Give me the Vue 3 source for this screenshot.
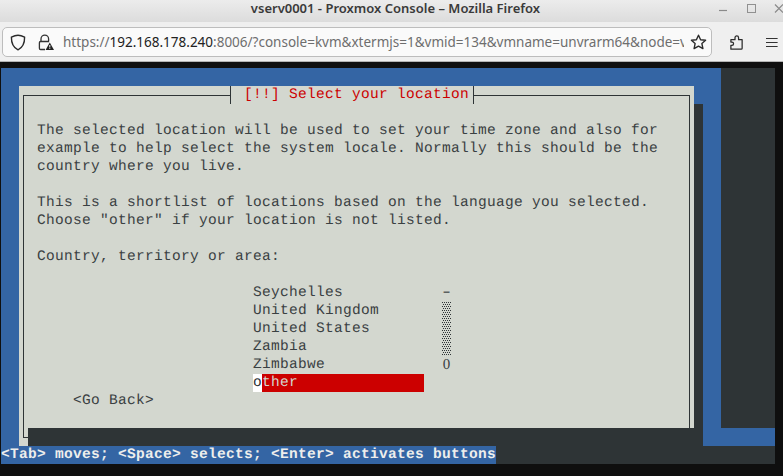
<script setup>
const message = `The selected location will be used to set your time zone and also for
example to help select the system locale. Normally this should be the
country where you live.

This is a shortlist of locations based on the language you selected.
Choose "other" if your location is not listed.

Country, territory or area:`
const countries = ['Seychelles', 'United Kingdom', 'United States', 'Zambia', 'Zimbabwe']
const url = 'https://'
const host = '192.168.178.240'
const rest = ':8006/?console=kvm&xtermjs=1&vmid=134&vmname=unvrarm64&node=v'
</script>

<template>
  <div class="page">
    <header class="titlebar">
      <span class="title">vserv0001 - Proxmox Console – Mozilla Firefox</span>
      <div class="winctl">
        <svg width="64" height="14" viewBox="0 0 64 14" fill="none" stroke="#8a8a8a">
          <path d="M0 10.5H8" stroke-width="1.2" />
          <rect x="28.5" y="4.5" width="8" height="8" stroke="#909090" />
          <path d="M56 4.5L64 12.5M64 4.5L56 12.5" stroke-width="1.2" />
        </svg>
      </div>
    </header>
    <nav class="toolbar">
      <div class="urlbar">
        <svg class="shield" width="16" height="17" viewBox="0 0 16 17" fill="none" stroke="#2b2b2b" stroke-width="1.4">
          <path d="M8 1.2C5.8 1.2 3.6 2 1.4 3.2C1.3 9 3.2 13.4 8 15.8C12.8 13.4 14.7 9 14.6 3.2C12.4 2 10.2 1.2 8 1.2Z" />
        </svg>
        <svg class="lock" width="16" height="17" viewBox="0 0 16 17" fill="none">
          <path d="M3 7.5V5A3.8 3.8 0 0 1 10.6 5V7.5" stroke="#333" stroke-width="1.3" />
          <path d="M7 15.5H2.6A1.2 1.2 0 0 1 1.4 14.3V8.7A1.2 1.2 0 0 1 2.6 7.5H11" stroke="#333" stroke-width="1.3" />
          <path d="M11.8 8.6L16 16H7.6Z" fill="#222" />
          <path d="M11.8 11V13.5M11.8 14.2V15" stroke="#fff" stroke-width="1" />
        </svg>
        <div class="url"><span class="dim">{{ url }}</span><span class="host">{{ host }}</span><span class="dim">{{ rest }}</span></div>
        <svg class="star" width="17" height="16" viewBox="0 0 17 16" fill="none" stroke="#2b2b2b" stroke-width="1.4" stroke-linejoin="round">
          <path d="M8.5 1.2L10.6 5.8L15.6 6.3L11.9 9.6L12.9 14.6L8.5 12.1L4.1 14.6L5.1 9.6L1.4 6.3L6.4 5.8Z" />
        </svg>
      </div>
      <svg class="puzzle" width="15" height="17" viewBox="0 0 15 17" fill="none" stroke="#2b2b2b" stroke-width="1.4" stroke-linejoin="round">
        <path d="M1 16V11.6H2.2A1.8 1.8 0 0 0 2.2 8H1V5.4H5.6V3.2A2 2 0 0 1 9.6 3.2V5.4H13.6V15A1 1 0 0 1 12.6 16Z" />
      </svg>
      <svg class="menu" width="13" height="11" viewBox="0 0 13 11" stroke="#333" stroke-width="1.3">
        <path d="M0 1H13M0 5.5H13M0 10H13" />
      </svg>
    </nav>
    <main class="terminal">
      <div class="screen-blue"></div>
      <div class="corner-blue"></div>
      <div class="dialog"></div>
      <div class="frame"></div>
      <div class="dialog-title">[!!] Select your location</div>
      <div class="shadow-right"></div>
      <div class="shadow-bottom"></div>
      <div class="message">{{ message }}</div>
      <ul class="list">
        <li v-for="name in countries" :key="name">{{ name }}</li>
        <li class="picked"><span class="cursor">o</span><span class="rest">ther</span></li>
      </ul>
      <div class="scroll">
        <span class="dash">-</span>
        <svg width="9" height="54" class="track">
          <defs>
            <pattern id="shade" width="2" height="4" patternUnits="userSpaceOnUse">
              <rect x="0" y="0" width="1" height="1" fill="#2e3436" />
              <rect x="1" y="2" width="1" height="1" fill="#2e3436" />
            </pattern>
          </defs>
          <rect width="9" height="54" fill="url(#shade)" />
        </svg>
        <span class="thumb">0</span>
      </div>
      <div class="back">&lt;Go Back&gt;</div>
      <div class="status">&lt;Tab&gt; moves; &lt;Space&gt; selects; &lt;Enter&gt; activates buttons</div>
    </main>
  </div>
</template>

<style>
html, body { margin: 0; background: #0f0f0f; }
</style>

<style scoped>
.page {
  width: 783px;
  height: 476px;
  overflow: hidden;
  display: flex;
  flex-direction: column;
  background: #0f0f0f;
}
.titlebar {
  height: 22px;
  box-sizing: border-box;
  padding-bottom: 5px;
  flex: none;
  display: flex;
  align-items: center;
  justify-content: center;
  position: relative;
  background: linear-gradient(#ececec, #dcdcdc);
}
.title {
  font: 600 13px/17px "Noto Sans", sans-serif;
  color: #3a3a3a;
  margin-left: 8px;
}
.winctl {
  position: absolute;
  left: 719px;
  top: 0;
  line-height: 0;
}
.toolbar {
  height: 40px;
  flex: none;
  box-sizing: border-box;
  display: flex;
  align-items: center;
  padding: 1px 5px 0 2px;
  background: #efefef;
  border-bottom: 1px solid #b4b4b4;
}
.urlbar {
  width: 710px;
  height: 30px;
  box-sizing: border-box;
  flex: none;
  display: flex;
  align-items: center;
  background: #fafafa;
  border: 1px solid #bdbdbd;
  border-radius: 5px;
  padding-left: 7px;
}
.lock { margin-left: 12px; }
.url {
  margin-left: 9px;
  width: 621px;
  flex: none;
  overflow: hidden;
  white-space: nowrap;
  font: 13.5px/20px "Noto Sans", sans-serif;
  color: #6e6e6e;
}
.host { color: #222; }
.star { margin-left: 6px; }
.puzzle { margin-left: 18px; }
.menu { margin-left: 23px; }
.terminal {
  margin: 6px 0 0 1px;
  display: grid;
  grid-template-columns: repeat(86, 9px);
  grid-template-rows: repeat(22, 18px);
  width: 774px;
  background: #2e3436;
  font: 14.5px/18px "Liberation Mono", monospace;
  letter-spacing: 0.3px;
  text-rendering: geometricPrecision;
  color: #3a4042;
}
.screen-blue { grid-area: 1 / 1 / 22 / 81; background: #3465a4; }
.corner-blue { grid-area: 21 / 79 / 22 / 87; background: #3465a4; }
.dialog { grid-area: 2 / 3 / 22 / 78; background: #d3d7cf; }
.frame {
  grid-area: 2 / 3 / 22 / 78;
  margin: 9px 4px 8px;
  border: 1px solid #2e3436;
}
.dialog-title {
  grid-area: 2 / 26 / 3 / 54;
  margin: 0 4px;
  padding-left: 13px;
  background: #d3d7cf;
  border: 1px solid #2e3436;
  border-width: 0 1px;
  color: #cc0000;
  white-space: pre;
}
.shadow-right { grid-area: 3 / 78 / 22 / 79; background: #2e3436; }
.shadow-bottom { grid-area: 21 / 4 / 22 / 78; background: #2e3436; }
.message { grid-area: 4 / 5 / 12 / 76; white-space: pre; }
.list {
  grid-area: 13 / 29 / 19 / 48;
  margin: 0;
  padding: 0;
  list-style: none;
  white-space: pre;
}
.list li { height: 18px; }
.picked { display: flex; background: #cc0000; color: #d3d7cf; }
.cursor { width: 9px; background: #fff; color: #2e3436; }
.scroll {
  grid-area: 13 / 50 / 18 / 51;
  display: flex;
  flex-direction: column;
}
.dash { height: 18px; transform: scaleX(1.5); text-align: center; letter-spacing: 0; }
.thumb { height: 18px; font-family: "Liberation Serif", serif; font-size: 15px; text-align: center; letter-spacing: 0; }
.track { display: block; }
.back { grid-area: 19 / 9 / 20 / 20; white-space: pre; }
.status {
  grid-area: 22 / 1 / 23 / 56;
  background: #3465a4;
  color: #eeeeec;
  font-weight: 700;
  white-space: pre;
}
</style>
